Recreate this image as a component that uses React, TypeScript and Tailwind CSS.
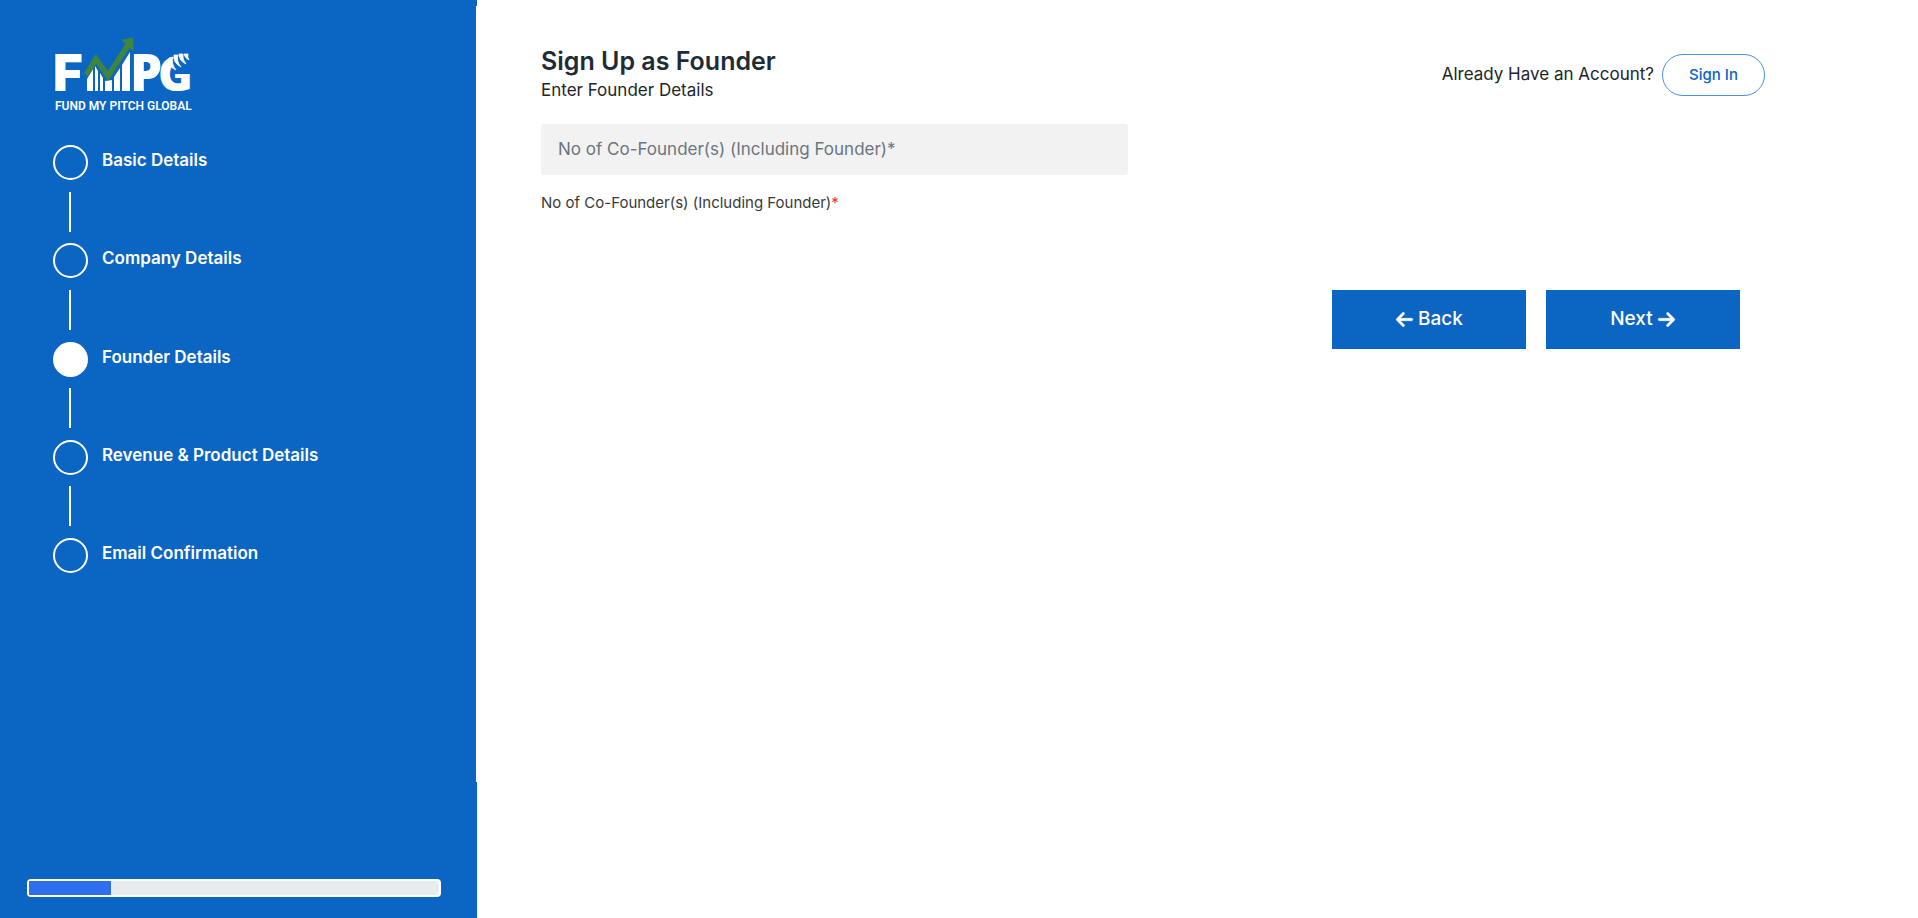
import { FaArrowLeft, FaArrowRight } from "react-icons/fa6";

const steps = [
  "Basic Details",
  "Company Details",
  "Founder Details",
  "Revenue & Product Details",
  "Email Confirmation",
];
const current = 2;

function Logo() {
  return (
    <svg width="142" height="78" viewBox="-3 0 142 78" role="img" aria-label="Fund My Pitch Global" className="block">
      <g fill="#fff">
        <text x="-2" y="54" fontSize="51" fontWeight="900" className="font-['Inter',sans-serif]">F</text>
        <text x="75" y="54" fontSize="51" fontWeight="800" className="font-['Open_Sans',sans-serif]">P</text>
        <text x="103" y="54" fontSize="47" fontWeight="800" className="font-['Open_Sans',sans-serif]">G</text>
      </g>
      <path d="M32 54V42L38 32V54ZM40 54V29L43 34V54ZM45 54V36L48 41V54ZM50 54V44L57 43V54ZM59 54V40L65 31V54ZM67 54V28L75 15V54Z" fill="#fff" />
      <path d="M115 14H138V37H119Z" fill="#0b65c2" />
      <path
        d="M114 21Q112 29 121 33Q116 27 118 20ZM119 18Q118 26 126 30Q121 24 123 18ZM124 17Q124 24 131 27Q127 22 128 17ZM129 17Q130 21 134 23Q132 20 133 17Z"
        fill="#fff"
        stroke="#fff"
        strokeWidth="0.8"
        strokeLinejoin="round"
      />
      <path d="M31 38L41 22L53 39L73 8" fill="none" stroke="#3f843f" strokeWidth="5.5" />
      <path d="M67 3L78 1V14Z" fill="#3f843f" stroke="#3f843f" strokeWidth="1" strokeLinejoin="round" />
      <text x="0" y="73" fill="#fff" fontSize="12" fontWeight="600" className="font-['Roboto',sans-serif]">FUND MY PITCH GLOBAL</text>
    </svg>
  );
}

export default function App() {
  return (
    <div className="flex min-h-screen bg-white font-['Inter',sans-serif] text-[#212529]">
      <aside className="relative flex w-[477px] shrink-0 flex-col bg-[#0b65c2] pt-[37px] pr-9 pb-[21px] pl-[27px] text-white">
        <span className="absolute top-1.5 right-0 bottom-[136px] w-px bg-white" />
        <div className="pl-[25px]">
          <Logo />
        </div>
        <ol className="mt-[30px] flex h-[428px] flex-col justify-between pl-[26px]">
          {steps.flatMap((step, i) => [
            ...(i > 0 ? [<li key={step + "-line"} aria-hidden="true" className="ml-4 h-10 w-0.5 bg-white" />] : []),
            <li key={step} aria-current={i === current ? "step" : undefined} className="flex gap-3.5">
              <span className={i === current ? "size-[35px] rounded-full bg-white" : "size-[35px] rounded-full border-2 border-white"} />
              <span className="text-[17px] leading-[30px] font-semibold">{step}</span>
            </li>,
          ])}
        </ol>
        <div
          role="progressbar"
          aria-label="Sign up progress"
          aria-valuenow={20}
          className="mt-auto h-[18px] rounded border-2 border-white bg-[#e9ecef]"
        >
          <div className="h-full bg-[#2f6fed]" style={{ width: "20%" }} />
        </div>
      </aside>
      <main className="flex-1 pt-[46px] pr-[153px] pl-16">
        <header className="flex justify-between">
          <div>
            <h1 className="text-[25px] leading-[30px] font-semibold text-[#212b36]">Sign Up as Founder</h1>
            <p className="text-[17px] leading-7">Enter Founder Details</p>
          </div>
          <div className="flex items-center gap-2">
            <span className="text-[17px]">Already Have an Account?</span>
            <a href="#signin" className="flex h-[42px] w-[103px] items-center justify-center rounded-full border border-[#4a90dc] text-[15px] font-medium text-[#0b65c2]">
              Sign In
            </a>
          </div>
        </header>
        <form className="mt-5">
          <input
            id="founders"
            placeholder="No of Co-Founder(s) (Including Founder)*"
            className="block h-[51px] w-full max-w-[587px] rounded-[3px] bg-[#f2f2f2] px-[17px] pb-0.5 text-[17px] outline-none placeholder:text-[#6c757d]"
          />
          <label htmlFor="founders" className="mt-4 block text-[15px] leading-6 text-[#3a3a3a]">
            No of Co-Founder(s) (Including Founder)<span className="text-[#e8303a]">*</span>
          </label>
          <div className="mt-[75px] flex justify-end gap-5 pr-[25px]">
            <button type="button" className="flex h-[59px] w-[194px] items-center justify-center gap-1 bg-[#0b65c2] text-[19px] font-medium text-white">
              <FaArrowLeft aria-hidden="true" strokeWidth={14} className="overflow-visible" />
              Back
            </button>
            <button type="button" className="flex h-[59px] w-[194px] items-center justify-center gap-1 bg-[#0b65c2] text-[19px] font-medium text-white">
              Next
              <FaArrowRight aria-hidden="true" strokeWidth={14} className="overflow-visible" />
            </button>
          </div>
        </form>
      </main>
    </div>
  );
}
